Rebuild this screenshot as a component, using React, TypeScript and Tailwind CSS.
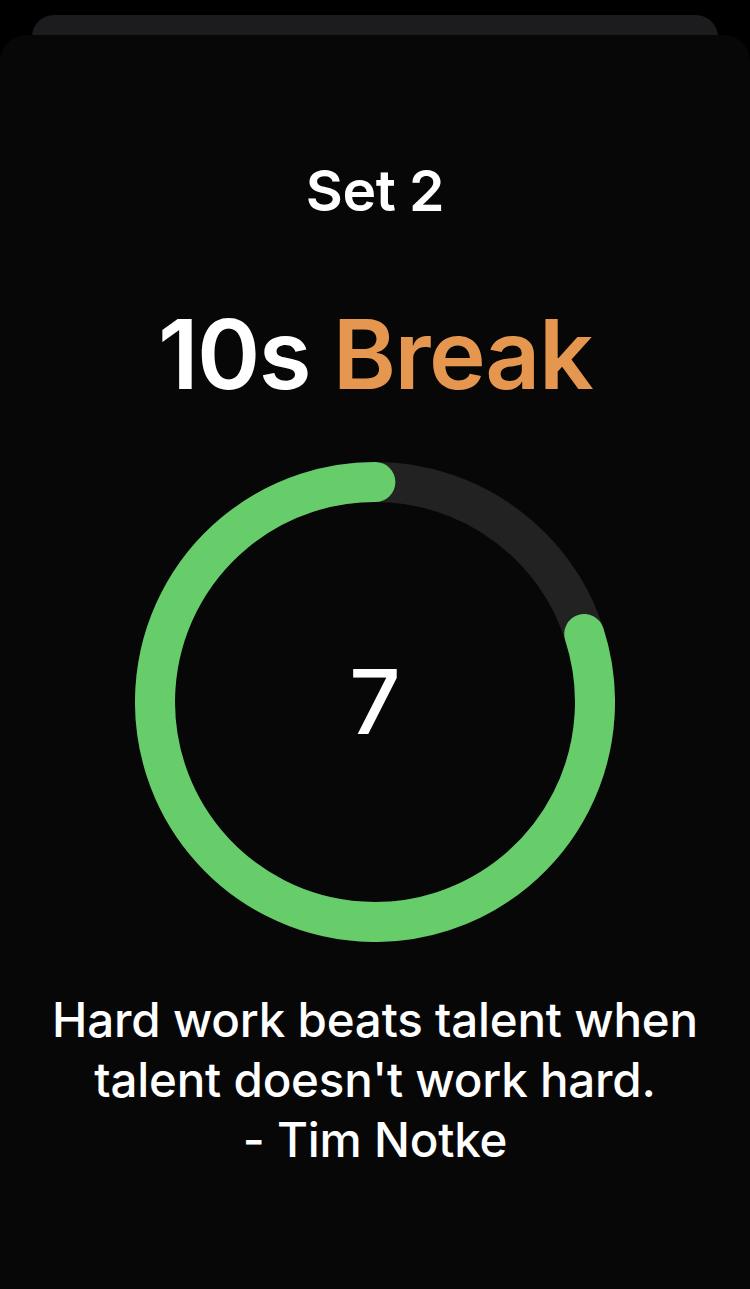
import React from "react";

export default function App() {
  const r = 220;
  const c = 2 * Math.PI * r;
  const progress = 0.8;
  return (
    <div
      className="relative w-[750px] h-[1289px] bg-black overflow-hidden"
      style={{ fontFamily: "Inter, 'Noto Sans', sans-serif" }}
    >
      <div className="absolute left-[32px] right-[32px] top-[15px] h-[60px] rounded-t-[22px] bg-[#1c1c1e]" />
      <div className="absolute left-0 right-0 top-[35px] bottom-0 rounded-t-[26px] bg-[#070707] flex flex-col items-center">
        <div className="mt-[121px] text-[57px] leading-[70px] font-semibold text-white tracking-[-0.5px]">
          Set 2
        </div>
        <div className="mt-[68px] text-[96px] leading-[120px] font-semibold tracking-[-1.5px]">
          <span className="text-white">10s</span>{" "}
          <span className="text-[#e5964f]">Break</span>
        </div>
        <div className="relative mt-[48px] w-[480px] h-[480px]">
          <svg width="480" height="480" viewBox="0 0 480 480">
            <circle cx="240" cy="240" r={r} fill="none" stroke="#222222" strokeWidth="40" />
            <circle
              cx="240"
              cy="240"
              r={r}
              fill="none"
              stroke="#66cd6a"
              strokeWidth="40"
              strokeLinecap="round"
              strokeDasharray={`${progress * c} ${c}`}
              transform="rotate(-18 240 240)"
            />
          </svg>
          <div className="absolute inset-0 flex items-center justify-center text-[90px] font-medium text-white leading-none">
            7
          </div>
        </div>
        <div className="mt-[48px] text-[47.5px] leading-[60px] font-medium text-white text-center tracking-[-0.2px]">
          Hard work beats talent when
          <br />
          talent doesn't work hard.
          <br />- Tim Notke
        </div>
      </div>
    </div>
  );
}
